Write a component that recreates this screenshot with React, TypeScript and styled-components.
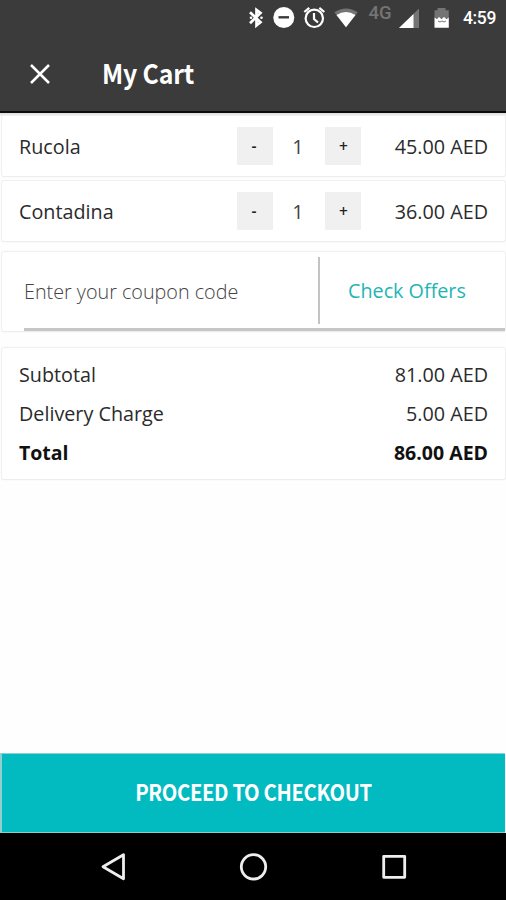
import React from "react";
import styled, { createGlobalStyle } from "styled-components";

const GlobalStyle = createGlobalStyle`
  * { box-sizing: border-box; }
  body { margin: 0; background: #fff; }
`;

const Screen = styled.div`
  width: 506px;
  height: 900px;
  display: flex;
  flex-direction: column;
  overflow: hidden;
  background: #fefefe;
  color: #2b2b2b;
  font-family: "Open Sans", "Noto Sans", sans-serif;
  font-size: 19.75px;
`;

const Header = styled.header`
  flex: none;
  height: 113px;
  background: #3b3b3b;
  border-bottom: 2px solid #0c0c0c;
`;

const StatusBar = styled.div`
  height: 36px;
  display: flex;
  justify-content: flex-end;
`;

const StatusIcons = styled.svg`
  display: block;
  width: 214px;
  height: 36px;
`;

const NetworkLabel = styled.text`
  font: 500 18.5px Roboto, sans-serif;
  fill: #747474;
`;

const Clock = styled.time`
  width: 49px;
  padding-left: 6px;
  font: 500 17.5px/36px Roboto, sans-serif;
  letter-spacing: -0.35px;
  color: #fff;
  white-space: nowrap;
`;

const TitleBar = styled.div`
  height: 75px;
  display: flex;
  align-items: center;
  padding-left: 29px;
  gap: 51px;
`;

const CloseButton = styled.button`
  display: block;
  width: 22px;
  height: 22px;
  padding: 0;
  border: 0;
  background: none;
  svg { display: block; }
`;

const Title = styled.h1`
  margin: 0 0 2px;
  font: 700 27px/40px "Noto Sans CJK SC", sans-serif;
  letter-spacing: -0.2px;
  transform: scaleX(0.92);
  transform-origin: left;
  color: #fff;
`;

const Content = styled.main`
  flex: 1;
  display: flex;
  flex-direction: column;
  padding: 3px 1px 0 2px;
  background: linear-gradient(#dcdcdc, #f4f4f4 3px, #fefefe 3px);
`;

const Card = styled.section<{ $height: number; $gap: number }>`
  flex: none;
  height: ${(p) => p.$height}px;
  margin-bottom: ${(p) => p.$gap}px;
  background: #fff;
  border-radius: 2px;
  box-shadow: 0 0 1px 1px #efefef, 0 1px 1px 0 #dadada;
`;

const ItemRow = styled(Card)`
  display: grid;
  grid-template-columns: 218px 36px 52px 36px 1fr;
  align-items: center;
  padding: 0 17px 0 17px;
`;

const Quantity = styled.span`
  padding-right: 2px;
  text-align: center;
  color: #444;
`;

const StepButton = styled.button`
  width: 36px;
  height: 38px;
  padding: 0 2px 1px 0;
  border: 0;
  background: #f0f0f0;
  font: 600 15.5px "Open Sans", sans-serif;
  color: #222;
  & ~ & { padding: 0 0 1px 1px; }
`;

const Amount = styled.span`
  text-align: right;
  white-space: nowrap;
`;

const Label = styled.span`
  white-space: nowrap;
`;

const CouponCard = styled(Card)`
  display: flex;
  padding-left: 22px;
`;

const CouponFields = styled.div`
  flex: 1;
  display: flex;
  padding-top: 5px;
  border-bottom: 3px solid #c6c6c6;
`;

const CouponInput = styled.input`
  width: 296px;
  height: 67px;
  padding: 1px 0 0;
  border: 0;
  border-right: 2px solid #c3c3c3;
  outline: 0;
  background: transparent;
  font: 300 19.75px "Open Sans", sans-serif;
  &::placeholder { color: #444; opacity: 1; }
`;

const OffersLink = styled.a`
  padding-left: 28px;
  line-height: 68px;
  color: #1eb5b5;
  white-space: nowrap;
`;

const Summary = styled(Card)`
  padding: 6.6px 17px 0 17px;
`;

const SummaryRow = styled.div<{ $strong?: boolean }>`
  display: flex;
  justify-content: space-between;
  line-height: 39.3px;
  font-weight: ${(p) => (p.$strong ? 700 : 400)};
  font-size: ${(p) => (p.$strong ? 19.5 : 19.75)}px;
  color: ${(p) => (p.$strong ? "#111" : "#2b2b2b")};
`;

const CheckoutButton = styled.button`
  flex: none;
  height: 80px;
  margin: 0 1px 0 0;
  padding: 0 0 4px;
  border: solid #8fcfcf;
  border-width: 1px 0 1px 2px;
  background: #02bbc1;
  font: 700 23px/30px "Noto Sans CJK SC", sans-serif;
  letter-spacing: -0.4px;
  color: #fff;
`;

const CheckoutLabel = styled.span`
  display: inline-block;
  transform: scaleX(0.88);
`;

const NavBar = styled.nav`
  flex: none;
  height: 67px;
  background: #000;
  svg { display: block; }
`;

const items = [
  { name: "Rucola", quantity: 1, price: "45.00 AED", height: 60, gap: 5 },
  { name: "Contadina", quantity: 1, price: "36.00 AED", height: 60, gap: 11 },
];

const totals = [
  { label: "Subtotal", amount: "81.00 AED" },
  { label: "Delivery Charge", amount: "5.00 AED" },
  { label: "Total", amount: "86.00 AED", strong: true },
];

function StatusGlyphs() {
  return (
    <StatusIcons viewBox="243 0 214 36">
      <g fill="none" stroke="#fff" strokeWidth="2.7">
        <path d="M250 12.2 260.5 22.2 256.5 25.5V10L260.5 13 250 23.2" />
      </g>
      <g fill="#fff">
        <circle cx="251" cy="17.7" r="1.3" />
        <circle cx="261.5" cy="17.7" r="1.3" />
        <circle cx="283.8" cy="17.5" r="10.5" />
      </g>
      <path d="M278.5 17.3h10.5" stroke="#3b3b3b" strokeWidth="2.4" />
      <g fill="none" stroke="#fff" strokeWidth="2.2">
        <circle cx="314.3" cy="18.3" r="8.7" />
        <path d="M314 13v6l4 3.5M304.3 12l5-4.2M319.3 7.8l5 4.2" />
      </g>
      <path d="M334.3 12.3Q346 4.5 357.7 12.3L346 27.3Z" fill="#747474" />
      <path d="M336.5 15Q346 9 355.5 15L346 27.3Z" fill="#fff" />
      <NetworkLabel x="368.5" y="18.5">4G</NetworkLabel>
      <path d="M399 28 419 8.5V28Z" fill="#747474" />
      <path d="M399 28 413.5 14V28Z" fill="#fff" />
      <path d="M434.5 10.3h3V8h8v2.3h3.3v8h-14.3Z" fill="#747474" />
      <path d="M434.5 17.5 437 19l2-2 2.5 2 2.5-2 2.5 2 2.3-1.5v10.3h-14.3Z" fill="#fff" />
      <path d="m438 21 2 1 2-1 2 1 2-1" fill="none" stroke="#777" strokeWidth="1" />
    </StatusIcons>
  );
}

export default function App() {
  return (
    <>
      <GlobalStyle />
      <Screen>
        <Header>
          <StatusBar>
            <StatusGlyphs />
            <Clock>4:59</Clock>
          </StatusBar>
          <TitleBar>
            <CloseButton aria-label="Close">
              <svg width="22" height="22" viewBox="0 0 22 22">
                <path d="m2 2 18 18M20 2 2 20" stroke="#fff" strokeWidth="2.5" />
              </svg>
            </CloseButton>
            <Title>My Cart</Title>
          </TitleBar>
        </Header>
        <Content>
          {items.map((item) => (
            <ItemRow key={item.name} $height={item.height} $gap={item.gap}>
              <Label>{item.name}</Label>
              <StepButton>-</StepButton>
              <Quantity>{item.quantity}</Quantity>
              <StepButton>+</StepButton>
              <Amount>{item.price}</Amount>
            </ItemRow>
          ))}
          <CouponCard $height={79} $gap={17}>
            <CouponFields>
              <CouponInput placeholder="Enter your coupon code" />
              <OffersLink>Check Offers</OffersLink>
            </CouponFields>
          </CouponCard>
          <Summary $height={131} $gap={0}>
            {totals.map((row) => (
              <SummaryRow key={row.label} $strong={row.strong}>
                <Label>{row.label}</Label>
                <Amount>{row.amount}</Amount>
              </SummaryRow>
            ))}
          </Summary>
        </Content>
        <CheckoutButton>
          <CheckoutLabel>PROCEED TO CHECKOUT</CheckoutLabel>
        </CheckoutButton>
        <NavBar>
          <svg width="506" height="67" viewBox="0 833 506 67" fill="none" stroke="#eee" strokeWidth="2.8" strokeLinejoin="round">
            <path d="M103 866.8 123.5 854.8V878.8Z" />
            <circle cx="253.5" cy="866.8" r="12.2" />
            <rect x="383.7" y="856.3" width="21" height="21" />
          </svg>
        </NavBar>
      </Screen>
    </>
  );
}
